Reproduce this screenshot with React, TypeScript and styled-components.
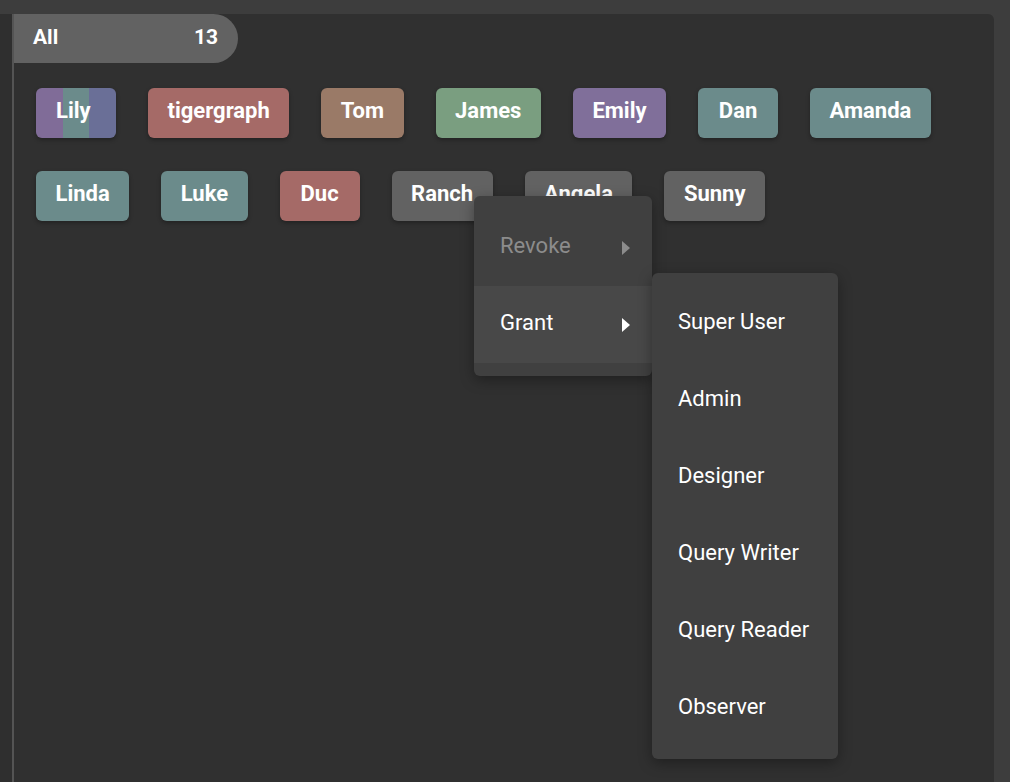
import * as React from 'react';
import styled, { createGlobalStyle } from 'styled-components';

const GlobalStyle = createGlobalStyle`
  html, body {
    margin: 0;
    padding: 0;
    background: #3d3d3d;
    font-family: Roboto, "Liberation Sans", Arial, sans-serif;
  }
`;

const Page = styled.div`
  width: 1010px;
  height: 782px;
  padding-top: 14px;
  box-sizing: border-box;
  display: flex;
  overflow: hidden;
`;

const Gutter = styled.div`
  width: 12px;
  background: #2f2f2f;
`;

const Panel = styled.div`
  position: relative;
  width: 980px;
  background: #303030;
  border-left: 2px solid #545454;
  border-top-right-radius: 6px;
`;

const AllPill = styled.div`
  display: flex;
  align-items: center;
  justify-content: space-between;
  width: 224px;
  height: 49px;
  box-sizing: border-box;
  padding: 0 20px 3px 19px;
  background: #626262;
  border-radius: 0 25px 25px 0;
  color: #fff;
  font-size: 21px;
  font-weight: 700;
`;

const ChipArea = styled.div`
  display: flex;
  flex-direction: column;
  gap: 33px;
  padding: 25px 0 0 22px;
`;

const ChipRow = styled.div`
  display: flex;
  gap: 32px;
`;

const Chip = styled.div<{ $bg: string }>`
  min-width: 80px;
  height: 50px;
  box-sizing: border-box;
  padding: 0 19.5px 5px;
  display: flex;
  align-items: center;
  justify-content: center;
  background: ${(p) => p.$bg};
  border-radius: 6px;
  box-shadow: 0 2px 4px rgba(0, 0, 0, 0.3);
  color: #fff;
  font-size: 22px;
  font-weight: 700;
`;

const Menu = styled.div<{ $left: number; $top: number; $width: number; $pad: number }>`
  position: absolute;
  left: ${(p) => p.$left}px;
  top: ${(p) => p.$top}px;
  width: ${(p) => p.$width}px;
  padding: ${(p) => p.$pad}px 0;
  background: #404040;
  border-radius: 6px;
  box-shadow: 0 4px 14px rgba(0, 0, 0, 0.35);
`;

const MenuItem = styled.div<{ $active?: boolean; $disabled?: boolean }>`
  height: 77px;
  box-sizing: border-box;
  display: flex;
  align-items: center;
  justify-content: space-between;
  padding: 0 22px 4px 26px;
  background: ${(p) => (p.$active ? '#484848' : 'transparent')};
  color: ${(p) => (p.$disabled ? '#8c8c8c' : '#fff')};
  font-size: 22px;
  font-weight: 400;
`;

const Arrow = ({ color }: { color: string }) => (
  <svg width="8" height="14" viewBox="0 0 8 14" style={{ marginTop: 4 }}>
    <polygon points="0,0 8,7 0,14" fill={color} />
  </svg>
);

const Lily = styled(Chip)`
  justify-content: flex-start;
  padding: 0 0 5px 20px;
  background: linear-gradient(
    90deg,
    #806c98 0 27px,
    #6b8b8b 27px 53px,
    #6a6f97 53px 100%
  );
`;

const row1: [string, string][] = [
  ['tigergraph', '#a56a67'],
  ['Tom', '#9a7a67'],
  ['James', '#7a9e80'],
  ['Emily', '#806f9a'],
  ['Dan', '#6b8b8b'],
  ['Amanda', '#6b8b8b'],
];

const row2: [string, string][] = [
  ['Linda', '#6b8b8b'],
  ['Luke', '#6b8b8b'],
  ['Duc', '#a56a67'],
  ['Ranch', '#626262'],
  ['Angela', '#626262'],
  ['Sunny', '#626262'],
];

const roles = ['Super User', 'Admin', 'Designer', 'Query Writer', 'Query Reader', 'Observer'];

export default function App() {
  return (
    <>
      <GlobalStyle />
      <Page>
        <Gutter />
        <Panel>
          <AllPill>
            <span>All</span>
            <span>13</span>
          </AllPill>
          <ChipArea>
            <ChipRow>
              <Lily $bg="#6b8b8b">Lily</Lily>
              {row1.map(([name, bg]) => (
                <Chip key={name} $bg={bg}>
                  {name}
                </Chip>
              ))}
            </ChipRow>
            <ChipRow>
              {row2.map(([name, bg]) => (
                <Chip key={name} $bg={bg}>
                  {name}
                </Chip>
              ))}
            </ChipRow>
          </ChipArea>

          <Menu $left={460} $top={182} $width={178} $pad={13}>
            <MenuItem $disabled>
              Revoke
              <Arrow color="#8c8c8c" />
            </MenuItem>
            <MenuItem $active>
              Grant
              <Arrow color="#fff" />
            </MenuItem>
          </Menu>

          <Menu $left={638} $top={259} $width={186} $pad={12}>
            {roles.map((r) => (
              <MenuItem key={r}>{r}</MenuItem>
            ))}
          </Menu>
        </Panel>
      </Page>
    </>
  );
}
